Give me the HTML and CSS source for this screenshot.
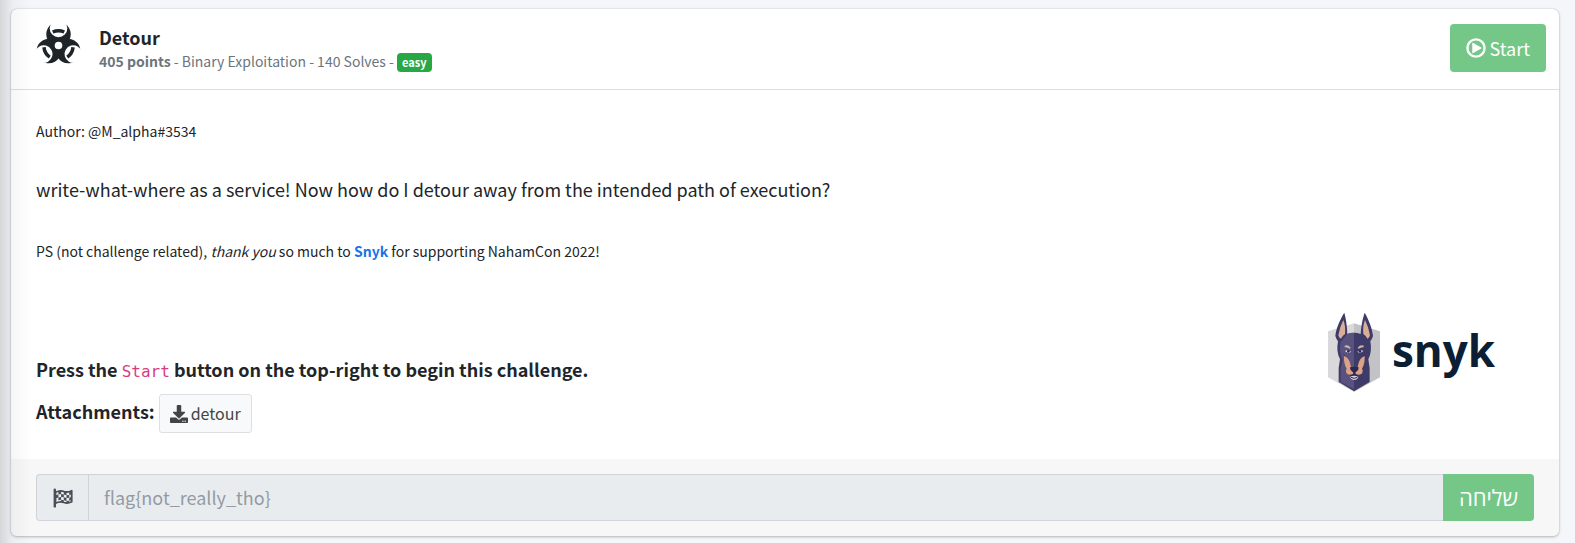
FILE: index.html
```html
<!DOCTYPE html>
<html lang="en">
<head>
<meta charset="utf-8">
<meta name="viewport" content="width=device-width, initial-scale=1">
<title>Detour</title>
<link rel="stylesheet" href="styles.css">
</head>
<body>
<main class="card">
  <header class="card-header">
    <svg class="challenge-icon" viewBox="0 0 45 42" aria-hidden="true">
      <defs>
        <g id="lobe"><circle cx="22.5" cy="10.5" r="12.5"/></g>
        <mask id="cut" maskUnits="userSpaceOnUse" x="-5" y="-10" width="60" height="60">
          <rect x="-5" y="-10" width="60" height="60" fill="#fff"/>
          <circle cx="22.5" cy="4.5" r="9"/>
          <circle cx="22.5" cy="4.5" r="9" transform="rotate(120 22.5 22)"/>
          <circle cx="22.5" cy="4.5" r="9" transform="rotate(240 22.5 22)"/>
          <circle cx="22.5" cy="22" r="3.9"/>
        </mask>
      </defs>
      <g fill="#1f2428" mask="url(#cut)">
        <use href="#lobe"/>
        <use href="#lobe" transform="rotate(120 22.5 22)"/>
        <use href="#lobe" transform="rotate(240 22.5 22)"/>
      </g>
      <g fill="none" stroke="#1f2428" stroke-width="3.6">
        <path id="arc" d="M16.600 8.200a14.5 14.5 0 0 1 11.800 0"/>
        <use href="#arc" transform="rotate(120 22.5 22)"/>
        <use href="#arc" transform="rotate(240 22.5 22)"/>
      </g>
    </svg>
    <div class="heading">
      <h1 class="title">Detour</h1>
      <p class="meta"><strong>405 points</strong> - Binary Exploitation - 140 Solves - <span class="badge">easy</span></p>
    </div>
    <button class="btn start" type="button">
      <svg class="start-icon" viewBox="0 0 20 20" aria-hidden="true"><circle cx="10" cy="10" r="8.6" fill="none" stroke="currentColor" stroke-width="2.4"/><path d="M6.8 5.2v9.6l8.4-4.8z" fill="currentColor" stroke="currentColor" stroke-linejoin="round"/></svg>
      Start
    </button>
  </header>

  <section class="card-body">
    <p class="small">Author: @M_alpha#3534</p>
    <p class="lead">write-what-where as a service! Now how do I detour away from the intended path of execution?</p>
    <p class="small">PS (not challenge related), <em>thank you</em> so much to <a class="link" href="#snyk">Snyk</a> for supporting NahamCon 2022!</p>
    <div class="bottom">
      <div class="actions">
        <p class="strong">Press the <code class="code">Start</code> button on the top-right to begin this challenge.</p>
        <p class="strong files">Attachments:
          <a class="download" href="#detour">
            <svg class="download-icon" viewBox="0 0 512 512" aria-hidden="true"><path fill="currentColor" d="M216 0h80c13.300 0 24 10.700 24 24v168h87.700c17.800 0 26.700 21.500 14.100 34.100L269.700 378.300c-7.500 7.500-19.800 7.500-27.300 0L90.100 226.100c-12.600-12.600-3.700-34.100 14.100-34.100H192V24c0-13.300 10.700-24 24-24zm296 376v112c0 13.300-10.700 24-24 24H24c-13.300 0-24-10.700-24-24V376c0-13.300 10.700-24 24-24h146.700l49 49c20.100 20.100 52.500 20.100 72.600 0l49-49H488c13.300 0 24 10.700 24 24zm-124 88c0-11-9-20-20-20s-20 9-20 20 9 20 20 20 20-9 20-20zm64 0c0-11-9-20-20-20s-20 9-20 20 9 20 20 20 20-9 20-20z"/></svg>detour</a>
        </p>
      </div>
      <div class="sponsor">
        <svg class="dog" viewBox="0 0 156 240" aria-hidden="true">
          <path fill="#d9d9db" d="M0 58 78 34v206L0 196z"/>
          <path fill="#c3c2c7" d="M78 34l78 24v138l-78 44z"/>
          <path fill="#3f3b69" d="M49 2c5 18 8 38 9 64q20-7 40 0c2-28 6-47 12-64 12 20 23 48 25 70q-3 10-8 16c4 20 2 38-6 54l4 26v42l-47 28-46-28v-42l4-26c-8-16-10-34-6-54q-5-6-8-16C24 50 36 22 49 2z"/>
          <path fill="#59527f" d="M58 66q10-4 20-4v170l-40-22v-40l6-26c-8-16-10-34-6-54z"/>
          <path fill="#d9ad98" d="M46 24c6 14 6 28 5 42q-8 5-12 14-7-3-8-10 4-25 15-46zM111 24c-6 14-6 28-5 42q8 5 12 14 7-3 8-10-4-25-15-46z"/>
          <path fill="#2f2a53" d="M46 122q7 26 12 43l9 27h22l9-27q7-17 12-43-9 20-18 28l-5 18H70l-5-18q-11-9-19-28z"/>
          <path fill="#dca286" d="M48 132q16 5 20 28l4 16q3 7 7 8 4-1 7-8l4-16q4-23 20-28 1 24-8 38 5 10-2 16-12 6-21-4-9 10-21 4-7-6-2-16-9-14-8-38z"/>
          <path fill="#2d2850" d="M66 166q13-4 26 0 0 11-10 14v7h-6v-7q-10-3-10-14z"/>
          <path fill="#d6b3a8" d="M50 101q9-4 18 6l-3 3q-9-6-15-4zM107 101q-9-4-18 6l3 3q9-6 15-4z"/>
          <path fill="#f3f1f4" d="M51 117q9-6 18 2-8 7-18-2zM106 117q-9-6-18 2 8 7 18-2z"/>
          <circle cx="61" cy="118" r="4" fill="#29234a"/><circle cx="96" cy="118" r="4" fill="#29234a"/>
          <path fill="#d8d0db" d="M66 195q12-8 25 0-3 9-12 9t-13-9z"/>
          <path fill="none" stroke="#2d2850" stroke-width="3" d="M69 196q10 6 19 0"/>
        </svg>
        <span class="wordmark">snyk</span>
      </div>
    </div>
  </section>

  <form class="card-footer">
    <label class="addon" for="flag" aria-label="Flag">
      <svg class="flag-icon" viewBox="0 0 20 20" aria-hidden="true">
        <path fill="none" stroke="currentColor" stroke-width="2.400" stroke-linecap="round" d="M1.800 1.800v16.600"/>
        <path fill="none" stroke="currentColor" stroke-width="1.800" stroke-linejoin="round" d="M2.500 4.200q4.500-2.400 8.500-.7 3.700 1.300 7.700-.8v11q-4 2.100-7.700.8-4-1.700-8.500.7z"/>
        <path fill="currentColor" d="M5.400 3.300l2.700-.2v2.900l-2.700.5zM10.800 3.500l2.700.8v3l-2.700-.9zM8.100 6l2.700.4v2.800l-2.700-.3zM13.500 7.300l2.700-.3v2.800l-2.700.3zM2.700 7.200l2.700-.7v2.900l-2.700.9zM5.400 9.400l2.700-.5v2.900l-2.700.5zM10.800 9.200l2.700.9v2.900l-2.700-.8zM8.100 11.800l2.700.4v2.500l-2.700-.6zM13.500 13l2.700-.3V15h-2.700zM16.200 4l2.500-.7v3l-2.500.7zM16.200 9.800l2.500-.8v3l-2.500.7z"/>
      </svg>
    </label>
    <input class="flag" id="flag" type="text" placeholder="flag{not_really_tho}" disabled>
    <button class="btn submit" type="button" lang="he">שליחה</button>
  </form>
</main>
</body>
</html>
```
FILE: styles.css
```css
* { box-sizing: border-box; }

body {
  margin: 0;
  padding: 9px 16px 6px 11px;
  background: #f4f6f9;
  color: #212529;
  font-family: "Noto Sans CJK SC", "Noto Sans", sans-serif;
  font-size: 14px;
  line-height: 24px;
}

/* Soft shade cast by the edge on the left */
body::before {
  content: "";
  position: fixed;
  top: 0;
  bottom: 0;
  left: 0;
  width: 32px;
  background: linear-gradient(to right, rgba(0, 0, 0, .13), rgba(0, 0, 0, .03) 40%, transparent);
  pointer-events: none;
  z-index: 1;
}

p, h1 { margin: 0; }

.card {
  background: #fff;
  border-radius: 6px;
  overflow: hidden;
  box-shadow: 0 0 1px rgba(0, 0, 0, .3), 0 1px 3px rgba(0, 0, 0, .25);
}

.card-header {
  display: flex;
  align-items: flex-start;
  padding: 15px 13px 16px 25px;
  border-bottom: 1px solid #dcdee0;
}

.challenge-icon { width: 45px; height: 41px; overflow: visible; }
.heading { margin-left: 18px; padding-top: 1px; }
.title { font-size: 18px; font-weight: 700; line-height: 24px; }
.meta { color: #6c757d; line-height: 24px; }

.badge {
  display: inline-block;
  padding: 0 5px;
  border-radius: 4px;
  background: #28a745;
  color: #fff;
  font-size: 11px;
  font-weight: 700;
  line-height: 19px;
}

.btn {
  border: 0;
  background: #74c787;
  color: #fff;
  font-family: inherit;
  font-size: 18px;
  line-height: 27px;
  padding: 10px 16px;
}

.start { display: flex; align-items: center; gap: 4px; margin-left: auto; border-radius: 4px; line-height: 28px; }
.start-icon { width: 20px; height: 20px; }

.card-body { padding: 29px 25px 26px; }
.lead { margin: 31px 0 35px; font-size: 18px; line-height: 30px; }
.link { color: #1a73e8; font-weight: 700; text-decoration: none; }

.bottom { display: flex; justify-content: space-between; margin-top: 49px; }
.actions { padding-top: 42px; }
.strong { font-size: 18px; font-weight: 700; line-height: 30px; }
.files { display: flex; align-items: flex-start; gap: 4px; margin-top: 7px; line-height: 34px; }
.code { color: #d63c84; font-family: "DejaVu Sans Mono", monospace; font-size: 16px; font-weight: 400; }

.download {
  display: flex;
  align-items: center;
  gap: 3px;
  padding: 5px 10px;
  border: 1px solid #dddfe2;
  border-radius: 3px;
  background: #f8f9fa;
  color: #444;
  font-size: 16px;
  font-weight: 400;
  line-height: 27px;
  text-decoration: none;
}
.download-icon { width: 18px; height: 18px; }

.sponsor { display: flex; align-items: flex-start; gap: 12px; margin-right: 39px; }
.dog { width: 52px; height: 80px; }
.wordmark {
  padding-top: 9px;
  color: #0b1e33;
  font-family: "Open Sans", sans-serif;
  font-size: 44px;
  font-weight: 700;
  line-height: 58px;
}

.card-footer { display: flex; padding: 15px 25px; background: #f7f7f7; }

.addon {
  display: flex;
  align-items: center;
  justify-content: center;
  width: 52px;
  border: 1px solid #ced4da;
  border-right: 0;
  border-radius: 4px 0 0 4px;
  background: #e9ecef;
  color: #495057;
}
.flag-icon { width: 20px; height: 20px; }

.flag {
  flex: 1;
  min-width: 0;
  padding: 8px 15px;
  border: 1px solid #ced4da;
  border-right: 0;
  background: #e9ecef;
  font-family: inherit;
  font-size: 18px;
  line-height: 27px;
}
.flag::placeholder { color: #939ba2; opacity: 1; }
.submit { border-radius: 0 4px 4px 0; font-family: "Open Sans", "Noto Sans", sans-serif; font-size: 22px; }
```
